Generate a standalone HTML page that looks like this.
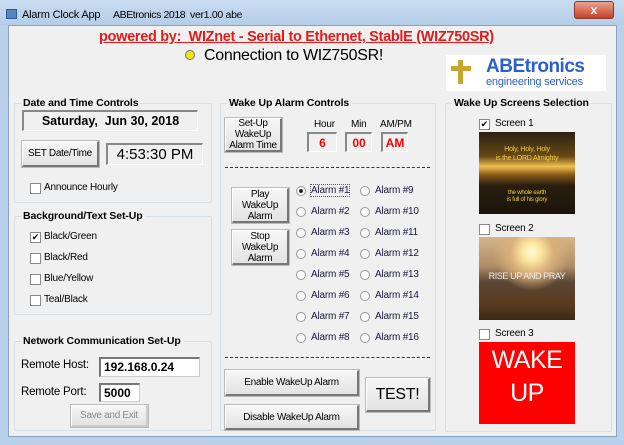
<!DOCTYPE html>
<html><head><style>
*{box-sizing:border-box;margin:0;padding:0}
body{width:624px;height:445px;overflow:hidden;background:#b9d1ea;font-family:"Liberation Sans",sans-serif;font-size:10px;color:#000;position:relative}
.a{position:absolute}
#client{left:8px;top:25px;width:609px;height:412px;background:#f0f0f0;border:1px solid #8aa2bd}
.g{position:absolute;border:1px solid #d5dfe5;border-radius:2px}
.gt{position:absolute;top:-7px;left:6px;background:#f0f0f0;padding:0 2px;font-weight:bold;font-size:10.5px;white-space:nowrap;letter-spacing:-.1px}
.btn{position:absolute;background:linear-gradient(#f6f6f6,#e3e3e3);border:1px solid #fff;border-right:2px solid #777;border-bottom:2px solid #777;outline:1px solid #bbb;display:flex;align-items:center;justify-content:center;text-align:center;font-size:10px;line-height:11px;letter-spacing:-.3px;white-space:nowrap}
.sunk{position:absolute;background:#f0f0f0;border:1px solid #fff;border-top:2px solid #888;border-left:2px solid #888;display:flex;align-items:center;justify-content:center;white-space:nowrap}
.inp{position:absolute;background:#fff;border:1px solid #ccc;border-top:2px solid #777;border-left:2px solid #777;font-weight:bold;font-size:12px;padding-left:3px;line-height:16px}
.cb{position:absolute;width:11px;height:11px;border:1px solid #888;background:#fff;font-size:9px;line-height:9px;text-align:center}
.lbl{position:absolute;white-space:nowrap;font-size:10px;letter-spacing:-.2px}
.rd{position:absolute;width:10px;height:10px;border-radius:50%;border:1px solid #999;background:#fafafa}
.red{color:#f00;font-weight:bold;font-size:12px}
</style></head><body>
<div class="a" style="left:0;top:0;width:624px;height:25px;background:linear-gradient(#c9dcf1,#b5cde8)"></div>
<div class="a" style="left:6px;top:9px;width:11px;height:10px;background:#5a84c0;border:1px solid #2f5a98"></div>
<div class="lbl" style="left:22px;top:9px;font-size:11px">Alarm Clock App</div>
<div class="lbl" style="left:113px;top:9px;font-size:10.5px;letter-spacing:-.4px">ABEtronics 2018</div>
<div class="lbl" style="left:190px;top:9px;font-size:10.5px;letter-spacing:-.3px">ver1.00 abe</div>
<div class="a" style="left:574px;top:1px;width:40px;height:18px;background:linear-gradient(#e8a390,#c6422a);border:1px solid #8a3a2c;border-radius:3px;color:#fff;font-weight:bold;text-align:center;line-height:16px;font-size:12px">x</div>
<div id="client" class="a"></div>

<div class="lbl" style="left:99px;top:29px;width:334px;text-align:center;color:#e31b1b;font-weight:bold;font-size:14.5px;letter-spacing:-.3px;text-decoration:underline">powered by:&nbsp; WIZnet - Serial to Ethernet, StablE (WIZ750SR)</div>
<div class="a" style="left:185px;top:50px;width:10px;height:10px;border-radius:50%;background:#f4e40c;border:1px solid #777"></div>
<div class="lbl" style="left:204px;top:47px;font-size:16px;letter-spacing:-.3px">Connection to WIZ750SR!</div>
<div class="a" style="left:446px;top:55px;width:160px;height:36px;background:#fff"></div>
<div class="a" style="left:458px;top:60px;width:5px;height:24px;background:#c9a631"></div>
<div class="a" style="left:451px;top:66px;width:20px;height:5px;background:#c9a631"></div>
<div class="lbl" style="left:486px;top:56px;color:#2b5fc9;font-weight:bold;font-size:19px;letter-spacing:-.5px">ABEtronics</div>
<div class="lbl" style="left:486px;top:76px;color:#2b5fc9;font-size:11px;letter-spacing:-.2px">engineering services</div>

<div class="g" style="left:14px;top:103px;width:198px;height:100px"><div class="gt">Date and Time Controls</div></div>
<div class="sunk" style="left:22px;top:110px;width:176px;height:21px;font-weight:bold;font-size:12.5px">Saturday,&nbsp; Jun 30, 2018</div>
<div class="btn" style="left:22px;top:141px;width:77px;height:26px">SET Date/Time</div>
<div class="sunk" style="left:106px;top:143px;width:97px;height:22px;font-size:15px">4:53:30 PM</div>
<div class="cb" style="left:30px;top:183px"></div><div class="lbl" style="left:44px;top:182px">Announce Hourly</div>

<div class="g" style="left:14px;top:216px;width:198px;height:99px"><div class="gt">Background/Text Set-Up</div></div>
<div class="cb" style="left:30px;top:232px">✔</div><div class="lbl" style="left:44px;top:231px">Black/Green</div>
<div class="cb" style="left:30px;top:253px"></div><div class="lbl" style="left:44px;top:252px">Black/Red</div>
<div class="cb" style="left:30px;top:274px"></div><div class="lbl" style="left:44px;top:273px">Blue/Yellow</div>
<div class="cb" style="left:30px;top:295px"></div><div class="lbl" style="left:44px;top:294px">Teal/Black</div>

<div class="g" style="left:14px;top:341px;width:198px;height:90px"><div class="gt">Network Communication Set-Up</div></div>
<div class="lbl" style="left:21px;top:359px;font-size:11.5px">Remote Host:</div>
<div class="inp" style="left:99px;top:357px;width:101px;height:20px">192.168.0.24</div>
<div class="lbl" style="left:21px;top:386px;font-size:11.5px">Remote Port:</div>
<div class="inp" style="left:99px;top:383px;width:41px;height:19px">5000</div>
<div class="btn" style="left:71px;top:405px;width:77px;height:22px;color:#888;border-right-color:#ccc;border-bottom-color:#ccc">Save and Exit</div>

<div class="g" style="left:220px;top:103px;width:216px;height:328px"><div class="gt">Wake Up Alarm Controls</div></div>
<div class="btn" style="left:225px;top:118px;width:57px;height:34px">Set-Up<br>WakeUp<br>Alarm Time</div>
<div class="lbl" style="left:314px;top:119px">Hour</div>
<div class="lbl" style="left:351px;top:119px">Min</div>
<div class="lbl" style="left:380px;top:119px">AM/PM</div>
<div class="sunk red" style="left:307px;top:132px;width:30px;height:20px">6</div>
<div class="sunk red" style="left:345px;top:132px;width:27px;height:20px">00</div>
<div class="sunk red" style="left:381px;top:132px;width:27px;height:20px">AM</div>
<div class="a" style="left:225px;top:167px;width:205px;border-top:1px dashed #333"></div>
<div class="btn" style="left:232px;top:188px;width:57px;height:35px">Play<br>WakeUp<br>Alarm</div>
<div class="btn" style="left:232px;top:230px;width:57px;height:35px">Stop<br>WakeUp<br>Alarm</div>
<div class="rd" style="left:296px;top:186px"><div class="a" style="left:2px;top:2px;width:4px;height:4px;border-radius:50%;background:#222"></div></div>
<div class="lbl" style="left:311px;top:185px;color:#1a1a40;outline:1px dotted #555">Alarm #1</div>
<div class="rd" style="left:296px;top:207px"></div><div class="lbl" style="left:311px;top:206px;color:#1a1a40">Alarm #2</div>
<div class="rd" style="left:296px;top:228px"></div><div class="lbl" style="left:311px;top:227px;color:#1a1a40">Alarm #3</div>
<div class="rd" style="left:296px;top:249px"></div><div class="lbl" style="left:311px;top:248px;color:#1a1a40">Alarm #4</div>
<div class="rd" style="left:296px;top:270px"></div><div class="lbl" style="left:311px;top:269px;color:#1a1a40">Alarm #5</div>
<div class="rd" style="left:296px;top:291px"></div><div class="lbl" style="left:311px;top:290px;color:#1a1a40">Alarm #6</div>
<div class="rd" style="left:296px;top:312px"></div><div class="lbl" style="left:311px;top:311px;color:#1a1a40">Alarm #7</div>
<div class="rd" style="left:296px;top:333px"></div><div class="lbl" style="left:311px;top:332px;color:#1a1a40">Alarm #8</div>
<div class="rd" style="left:360px;top:186px"></div><div class="lbl" style="left:375px;top:185px;color:#1a1a40">Alarm #9</div>
<div class="rd" style="left:360px;top:207px"></div><div class="lbl" style="left:375px;top:206px;color:#1a1a40">Alarm #10</div>
<div class="rd" style="left:360px;top:228px"></div><div class="lbl" style="left:375px;top:227px;color:#1a1a40">Alarm #11</div>
<div class="rd" style="left:360px;top:249px"></div><div class="lbl" style="left:375px;top:248px;color:#1a1a40">Alarm #12</div>
<div class="rd" style="left:360px;top:270px"></div><div class="lbl" style="left:375px;top:269px;color:#1a1a40">Alarm #13</div>
<div class="rd" style="left:360px;top:291px"></div><div class="lbl" style="left:375px;top:290px;color:#1a1a40">Alarm #14</div>
<div class="rd" style="left:360px;top:312px"></div><div class="lbl" style="left:375px;top:311px;color:#1a1a40">Alarm #15</div>
<div class="rd" style="left:360px;top:333px"></div><div class="lbl" style="left:375px;top:332px;color:#1a1a40">Alarm #16</div>
<div class="a" style="left:225px;top:357px;width:205px;border-top:1px dashed #333"></div>
<div class="btn" style="left:225px;top:370px;width:134px;height:26px">Enable WakeUp Alarm</div>
<div class="btn" style="left:225px;top:405px;width:134px;height:25px">Disable WakeUp Alarm</div>
<div class="btn" style="left:366px;top:378px;width:64px;height:34px;font-size:16px">TEST!</div>

<div class="g" style="left:445px;top:103px;width:167px;height:329px"><div class="gt">Wake Up Screens Selection</div></div>
<div class="cb" style="left:479px;top:119px">✔</div><div class="lbl" style="left:495px;top:118px">Screen 1</div>
<div class="a" style="left:479px;top:132px;width:96px;height:82px;background:linear-gradient(#2b2010 0%,#6a4a18 30%,#f0c050 42%,#8a5a18 52%,#2a1e10 65%,#1a140a 100%)"></div>
<div class="lbl" style="left:479px;top:145px;width:96px;text-align:center;color:#f0d040;font-size:7px;line-height:9px">Holy, Holy, Holy<br>is the LORD Almighty</div>
<div class="lbl" style="left:479px;top:190px;width:96px;text-align:center;color:#f0d040;font-size:6px;line-height:7px">the whole earth<br>is full of his glory</div>
<div class="cb" style="left:479px;top:224px"></div><div class="lbl" style="left:495px;top:223px">Screen 2</div>
<div class="a" style="left:479px;top:237px;width:96px;height:83px;background:radial-gradient(circle at 55% 18%,#fffbe0 0,#ffe9a0 10%,#d9b07a 25%,transparent 45%),linear-gradient(#d5b48c 0%,#b08c66 35%,#5a4634 55%,#5a3a1e 80%,#3d2a14 100%)"></div>
<div class="lbl" style="left:479px;top:271px;width:96px;text-align:center;color:#eee;font-size:9px;letter-spacing:-.4px">RISE UP AND PRAY</div>
<div class="cb" style="left:479px;top:329px"></div><div class="lbl" style="left:495px;top:328px">Screen 3</div>
<div class="a" style="left:479px;top:342px;width:96px;height:82px;background:#f00;color:#fff;font-size:25px;line-height:33px;text-align:center;padding-top:2px;letter-spacing:-.5px">WAKE<br>UP</div>
</body></html>
